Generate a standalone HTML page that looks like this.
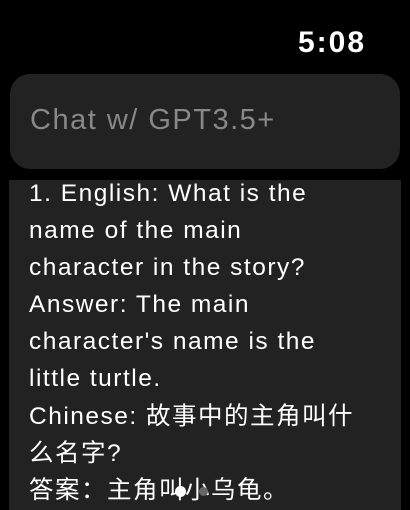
<!DOCTYPE html>
<html><head><meta charset="utf-8"><style>
html,body{margin:0;padding:0;background:#000;width:410px;height:502px;overflow:hidden;font-family:"Liberation Sans","Noto Sans CJK SC",sans-serif;}
.time{position:absolute;right:44px;top:26px;color:#fff;font-size:30px;font-weight:bold;letter-spacing:2px;}
.input{position:absolute;left:10px;top:74px;width:390px;height:95px;background:#222;border-radius:20px;}
.ph{position:absolute;left:30px;top:104px;color:#888;font-size:29px;letter-spacing:1.5px;}
.box{position:absolute;left:9px;top:180px;width:392px;height:330px;background:#222;}
.txt{position:absolute;left:29px;top:175px;color:#fff;font-size:24.5px;letter-spacing:1.5px;line-height:37.1px;width:372px;white-space:nowrap;}
.d1{position:absolute;left:175px;top:486px;width:11px;height:11px;border-radius:50%;background:#fff;}
.d2{position:absolute;left:199px;top:487px;width:9px;height:9px;border-radius:50%;background:#666;}
</style></head><body>
<div class="time">5:08</div>
<div class="input"></div>
<div class="ph">Chat w/ GPT3.5+</div>
<div class="box"></div>
<div class="txt">1. English: What is the<br>name of the main<br>character in the story?<br>Answer: The main<br>character's name is the<br>little turtle.<br>Chinese: 故事中的主角叫什<br>么名字?<br>答案：主角叫小乌龟。</div>
<div class="d1"></div><div class="d2"></div>
</body></html>
